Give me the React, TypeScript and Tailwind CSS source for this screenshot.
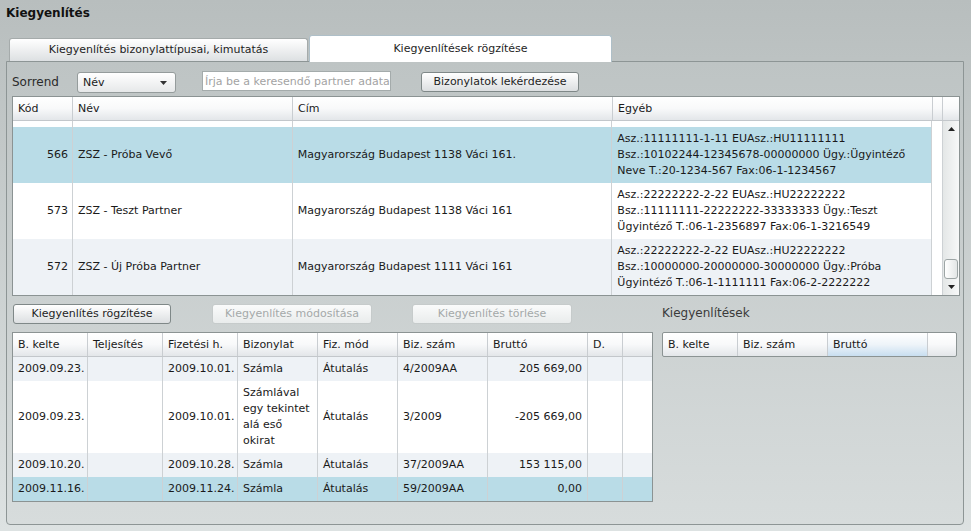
import React from 'react';

type PartnerRow = {
  kod: string;
  nev: string;
  cim: string;
  egyeb: string[];
  bg: string;
};

const partners: PartnerRow[] = [
  {
    kod: '566',
    nev: 'ZSZ - Próba Vevő',
    cim: 'Magyarország Budapest 1138 Váci 161.',
    egyeb: [
      'Asz.:11111111-1-11 EUAsz.:HU11111111',
      'Bsz.:10102244-12345678-00000000 Ügy.:Ügyintéző',
      'Neve T.:20-1234-567 Fax:06-1-1234567',
    ],
    bg: 'bg-[#b9dce7]',
  },
  {
    kod: '573',
    nev: 'ZSZ - Teszt Partner',
    cim: 'Magyarország Budapest 1138 Váci 161',
    egyeb: [
      'Asz.:22222222-2-22 EUAsz.:HU22222222',
      'Bsz.:11111111-22222222-33333333 Ügy.:Teszt',
      'Ügyintéző T.:06-1-2356897 Fax:06-1-3216549',
    ],
    bg: 'bg-white',
  },
  {
    kod: '572',
    nev: 'ZSZ - Új Próba Partner',
    cim: 'Magyarország Budapest 1111 Váci 161',
    egyeb: [
      'Asz.:22222222-2-22 EUAsz.:HU22222222',
      'Bsz.:10000000-20000000-30000000 Ügy.:Próba',
      'Ügyintéző T.:06-1-1111111 Fax:06-2-2222222',
    ],
    bg: 'bg-[#eef2f6]',
  },
];

type DocRow = {
  kelte: string;
  fizh: string;
  bizonylat: string[];
  mod: string;
  szam: string;
  brutto: string;
  bg: string;
};

const docs: DocRow[] = [
  { kelte: '2009.09.23.', fizh: '2009.10.01.', bizonylat: ['Számla'], mod: 'Átutalás', szam: '4/2009AA', brutto: '205 669,00', bg: 'bg-[#eef2f6]' },
  {
    kelte: '2009.09.23.',
    fizh: '2009.10.01.',
    bizonylat: ['Számlával', 'egy tekintet', 'alá eső', 'okirat'],
    mod: 'Átutalás',
    szam: '3/2009',
    brutto: '-205 669,00',
    bg: 'bg-white',
  },
  { kelte: '2009.10.20.', fizh: '2009.10.28.', bizonylat: ['Számla'], mod: 'Átutalás', szam: '37/2009AA', brutto: '153 115,00', bg: 'bg-[#eef2f6]' },
  { kelte: '2009.11.16.', fizh: '2009.11.24.', bizonylat: ['Számla'], mod: 'Átutalás', szam: '59/2009AA', brutto: '0,00', bg: 'bg-[#b9dce7]' },
];

const headCell = 'h-full flex items-center pl-[5px] border-r border-[#c9cdd1] whitespace-nowrap';
const bodyCell = 'h-full flex items-center px-[5px] border-r border-[#cdd1d4] whitespace-nowrap';

const Button = ({ label, width, disabled = false }: { label: string; width: string; disabled?: boolean }) => (
  <div
    className={`${width} h-[20px] flex items-center justify-center rounded-[3px] border text-[11px] ${
      disabled
        ? 'border-[#c6cbcb] bg-linear-to-b from-[#fafbfb] to-[#e9ecec] text-[#a4a9a9]'
        : 'border-[#7f8888] bg-linear-to-b from-white to-[#dcdfe1] text-[#1e1e1e]'
    }`}
  >
    {label}
  </div>
);

export default function App() {
  return (
    <div className="w-[971px] h-[531px] overflow-hidden flex flex-col bg-linear-to-b from-[#b8bebe] to-[#dde2e2] font-['DejaVu_Sans',sans-serif] text-[11px] leading-[16px] text-[#1a1a1a]">
      <div className="pt-[5px] pl-[6px] h-[22px] text-[12px] font-bold leading-[16px] text-[#111]">Kiegyenlítés</div>

      {/* tabs */}
      <div className="mt-[13px] h-[26px] flex items-end">
        <div className="ml-[9px] w-[299px] h-[23px] flex items-center justify-center rounded-t-[3px] border border-b-0 border-[#a5abab] bg-linear-to-b from-white to-[#dde0e2] text-[#1e1e1e]">
          Kiegyenlítés bizonylattípusai, kimutatás
        </div>
        <div className="relative z-10 -mb-[1px] ml-[1px] w-[303px] h-[27px] flex items-center justify-center rounded-t-[3px] border border-b-0 border-[#aebfc8] bg-white text-[#1e1e1e]">
          Kiegyenlítések rögzítése
        </div>
      </div>

      {/* panel */}
      <div className="ml-[6px] w-[958px] h-[464px] border border-[#8d9595] rounded-b-[4px] bg-linear-to-b from-[#bec4c4] to-[#d7dcdc] flex flex-col pl-[5px]">
        {/* toolbar */}
        <div className="pt-[9px] flex items-start h-[31px]">
          <div className="w-[65px] h-[22px] flex items-center text-[12px] text-[#2a2a2a]">Sorrend</div>
          <div className="mt-[1px] w-[99px] h-[21px] rounded-[3px] border border-[#959c9c] bg-linear-to-b from-white to-[#e6e8e9] flex items-center justify-between pl-[5px] pr-[8px]">
            <span>Név</span>
            <svg width="7" height="4" viewBox="0 0 7 4">
              <path d="M0 0h7L3.5 4z" fill="#333" />
            </svg>
          </div>
          <input
            className="ml-[26px] w-[189px] h-[20px] border border-[#a4abab] bg-white pl-[2px] text-[11px] outline-none placeholder:text-[#a3a3a3]"
            placeholder="Írja be a keresendő partner adata"
          />
          <div className="ml-[30px] mt-[1px]">
            <Button label="Bizonylatok lekérdezése" width="w-[158px]" />
          </div>
        </div>

        {/* partner grid */}
        <div className="mt-[3px] w-[948px] h-[200px] border border-[#8b9393] bg-white flex flex-col">
          <div className="h-[24px] flex border-b border-[#c3c7cb] bg-linear-to-b from-white via-[#f8f9fa] to-[#e3e6e9]">
            <div className={`${headCell} w-[60px]`}>Kód</div>
            <div className={`${headCell} w-[220px]`}>Név</div>
            <div className={`${headCell} w-[320px]`}>Cím</div>
            <div className={`${headCell} w-[320px]`}>Egyéb</div>
            <div className={`${headCell} w-[10px]`} />
            <div className="flex-1" />
          </div>
          <div className="flex-1 flex overflow-hidden">
            <div className="w-[930px] flex flex-col">
              <div className="h-[6px] flex bg-white">
                <div className={`${bodyCell} w-[60px]`} />
                <div className={`${bodyCell} w-[220px]`} />
                <div className={`${bodyCell} w-[320px]`} />
                <div className={`${bodyCell} w-[320px]`} />
                <div className={`${bodyCell} w-[10px]`} />
              </div>
              {partners.map((p) => (
                <div key={p.kod} className={`h-[56px] flex ${p.bg}`}>
                  <div className={`${bodyCell} w-[60px] justify-end pr-[4px]`}>{p.kod}</div>
                  <div className={`${bodyCell} w-[220px]`}>{p.nev}</div>
                  <div className={`${bodyCell} w-[320px]`}>{p.cim}</div>
                  <div className={`${bodyCell} w-[320px] flex-col !items-start justify-center`}>
                    {p.egyeb.map((l) => (
                      <div key={l}>{l}</div>
                    ))}
                  </div>
                  <div className={`${bodyCell} w-[10px] bg-white`} />
                </div>
              ))}
            </div>
            {/* scrollbar */}
            <div className="flex-1 flex flex-col bg-linear-to-r from-[#e4e7e7] to-[#f7f8f8]">
              <div className="h-[16px] flex items-center justify-center">
                <svg width="7" height="4" viewBox="0 0 7 4">
                  <path d="M3.5 0L7 4H0z" fill="#222" />
                </svg>
              </div>
              <div className="flex-1" />
              <div className="h-[20px] mx-[1px] rounded-[3px] border border-[#9da5a5] bg-linear-to-r from-white to-[#e3e6e6]" />
              <div className="h-[16px] flex items-center justify-center">
                <svg width="7" height="4" viewBox="0 0 7 4">
                  <path d="M0 0h7L3.5 4z" fill="#222" />
                </svg>
              </div>
            </div>
          </div>
        </div>

        {/* bottom area */}
        <div className="mt-[8px] flex">
          <div className="w-[641px] flex flex-col">
            <div className="flex pl-[1px]">
              <Button label="Kiegyenlítés rögzítése" width="w-[158px]" />
              <div className="ml-[41px]">
                <Button label="Kiegyenlítés módosítása" width="w-[160px]" disabled />
              </div>
              <div className="ml-[40px]">
                <Button label="Kiegyenlítés törlése" width="w-[160px]" disabled />
              </div>
            </div>
            <div className="mt-[8px] w-[641px] border border-[#8b9393] bg-white flex flex-col">
              <div className="h-[24px] flex border-b border-[#c3c7cb] bg-linear-to-b from-white via-[#f8f9fa] to-[#e3e6e9]">
                <div className={`${headCell} w-[75px]`}>B. kelte</div>
                <div className={`${headCell} w-[75px]`}>Teljesítés</div>
                <div className={`${headCell} w-[75px]`}>Fizetési h.</div>
                <div className={`${headCell} w-[80px]`}>Bizonylat</div>
                <div className={`${headCell} w-[80px]`}>Fiz. mód</div>
                <div className={`${headCell} w-[90px]`}>Biz. szám</div>
                <div className={`${headCell} w-[100px]`}>Bruttó</div>
                <div className={`${headCell} w-[35px]`}>D.</div>
                <div className="flex-1" />
              </div>
              {docs.map((d, i) => (
                <div key={i} className={`flex ${d.bg} ${d.bizonylat.length > 1 ? 'h-[72px]' : 'h-[24px]'}`}>
                  <div className={`${bodyCell} w-[75px]`}>{d.kelte}</div>
                  <div className={`${bodyCell} w-[75px]`} />
                  <div className={`${bodyCell} w-[75px]`}>{d.fizh}</div>
                  <div className={`${bodyCell} w-[80px] flex-col !items-start justify-center`}>
                    {d.bizonylat.map((b) => (
                      <div key={b}>{b}</div>
                    ))}
                  </div>
                  <div className={`${bodyCell} w-[80px]`}>{d.mod}</div>
                  <div className={`${bodyCell} w-[90px]`}>{d.szam}</div>
                  <div className={`${bodyCell} w-[100px] justify-end`}>{d.brutto}</div>
                  <div className={`${bodyCell} w-[35px]`} />
                  <div className="flex-1" />
                </div>
              ))}
            </div>
          </div>

          <div className="ml-[9px] flex flex-col">
            <div className="pt-[1px] h-[28px] text-[12px] leading-[16px] text-[#3a3a3a]">Kiegyenlítések</div>
            <div className="w-[295px] h-[25px] border border-[#8b9393] rounded-[2px] flex bg-linear-to-b from-white via-[#f8f9fa] to-[#e3e6e9]">
              <div className={`${headCell} w-[75px]`}>B. kelte</div>
              <div className={`${headCell} w-[90px]`}>Biz. szám</div>
              <div className={`${headCell} w-[100px] bg-linear-to-b from-white via-[#eef4f9] to-[#c8def0]`}>Bruttó</div>
              <div className="flex-1" />
            </div>
          </div>
        </div>
      </div>
    </div>
  );
}
